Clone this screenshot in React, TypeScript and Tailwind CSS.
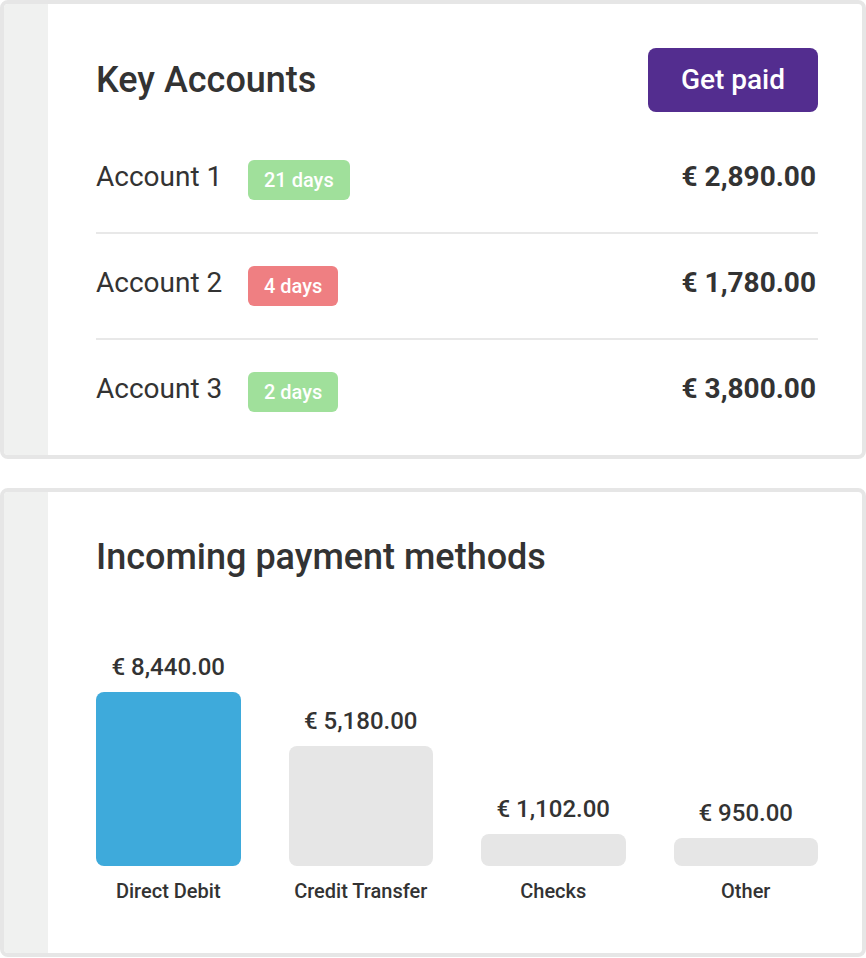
import React from "react";

const accounts = [
  { name: "Account 1", days: "21 days", ok: true, amount: "€ 2,890.00" },
  { name: "Account 2", days: "4 days", ok: false, amount: "€ 1,780.00" },
  { name: "Account 3", days: "2 days", ok: true, amount: "€ 3,800.00" },
];

const methods = [
  { label: "Direct Debit", amount: "€ 8,440.00", h: 174, active: true },
  { label: "Credit Transfer", amount: "€ 5,180.00", h: 120, active: false },
  { label: "Checks", amount: "€ 1,102.00", h: 32, active: false },
  { label: "Other", amount: "€ 950.00", h: 28, active: false },
];

function Card({ children }: { children: React.ReactNode }) {
  return (
    <div className="flex w-full rounded-[8px] border-4 border-[#e6e6e6] bg-white overflow-hidden">
      <div className="w-[44px] shrink-0 bg-[#f0f1f0]" />
      <div className="flex-1 pl-[48px] pr-[44px]">{children}</div>
    </div>
  );
}

export default function App() {
  return (
    <div
      className="w-[866px] h-[958px] bg-white text-[#333333] flex flex-col gap-[29px]"
      style={{ fontFamily: "Roboto, 'Noto Sans', sans-serif" }}
    >
      <Card>
        <div className="pt-[44px] pb-[11px]">
          <div className="flex items-center justify-between h-[64px]">
            <h1 className="text-[36px] font-medium leading-none">Key Accounts</h1>
            <button className="w-[170px] h-[64px] rounded-[8px] bg-[#532d8f] text-white text-[28px] font-medium">
              Get paid
            </button>
          </div>
          <div className="mt-[16px]">
            {accounts.map((a, i) => (
              <div key={a.name}>
                {i > 0 && <div className="h-[2px] bg-[#e8e8e8]" />}
                <div className="h-[104px] flex items-center">
                  <span className="text-[28px] leading-none w-[152px] -mt-[6px]">{a.name}</span>
                  <span
                    className={`inline-flex items-center justify-center h-[40px] px-[16px] rounded-[6px] text-white text-[20px] font-medium ${
                      a.ok ? "bg-[#a0e09b]" : "bg-[#ef7f82]"
                    }`}
                  >
                    {a.days}
                  </span>
                  <span className="ml-auto text-[28px] font-bold leading-none pr-[2px] -mt-[6px]">{a.amount}</span>
                </div>
              </div>
            ))}
          </div>
        </div>
      </Card>
      <Card>
        <div className="pt-[45px] pb-[50px]">
          <h2 className="text-[36px] font-medium leading-[40px]">Incoming payment methods</h2>
          <div className="mt-[76px] grid grid-cols-4 gap-x-[48px] items-end">
            {methods.map((m) => (
              <div key={m.label} className="flex flex-col items-center">
                <div className="text-[24px] font-medium leading-[28px]">{m.amount}</div>
                <div
                  className={`mt-[11px] w-full rounded-[8px] ${m.active ? "bg-[#3eaadb]" : "bg-[#e6e6e6]"}`}
                  style={{ height: m.h }}
                />
              </div>
            ))}
          </div>
          <div className="mt-[13px] grid grid-cols-4 gap-x-[48px]">
            {methods.map((m) => (
              <div key={m.label} className="text-center text-[20px] font-medium leading-[24px]">
                {m.label}
              </div>
            ))}
          </div>
        </div>
      </Card>
    </div>
  );
}
